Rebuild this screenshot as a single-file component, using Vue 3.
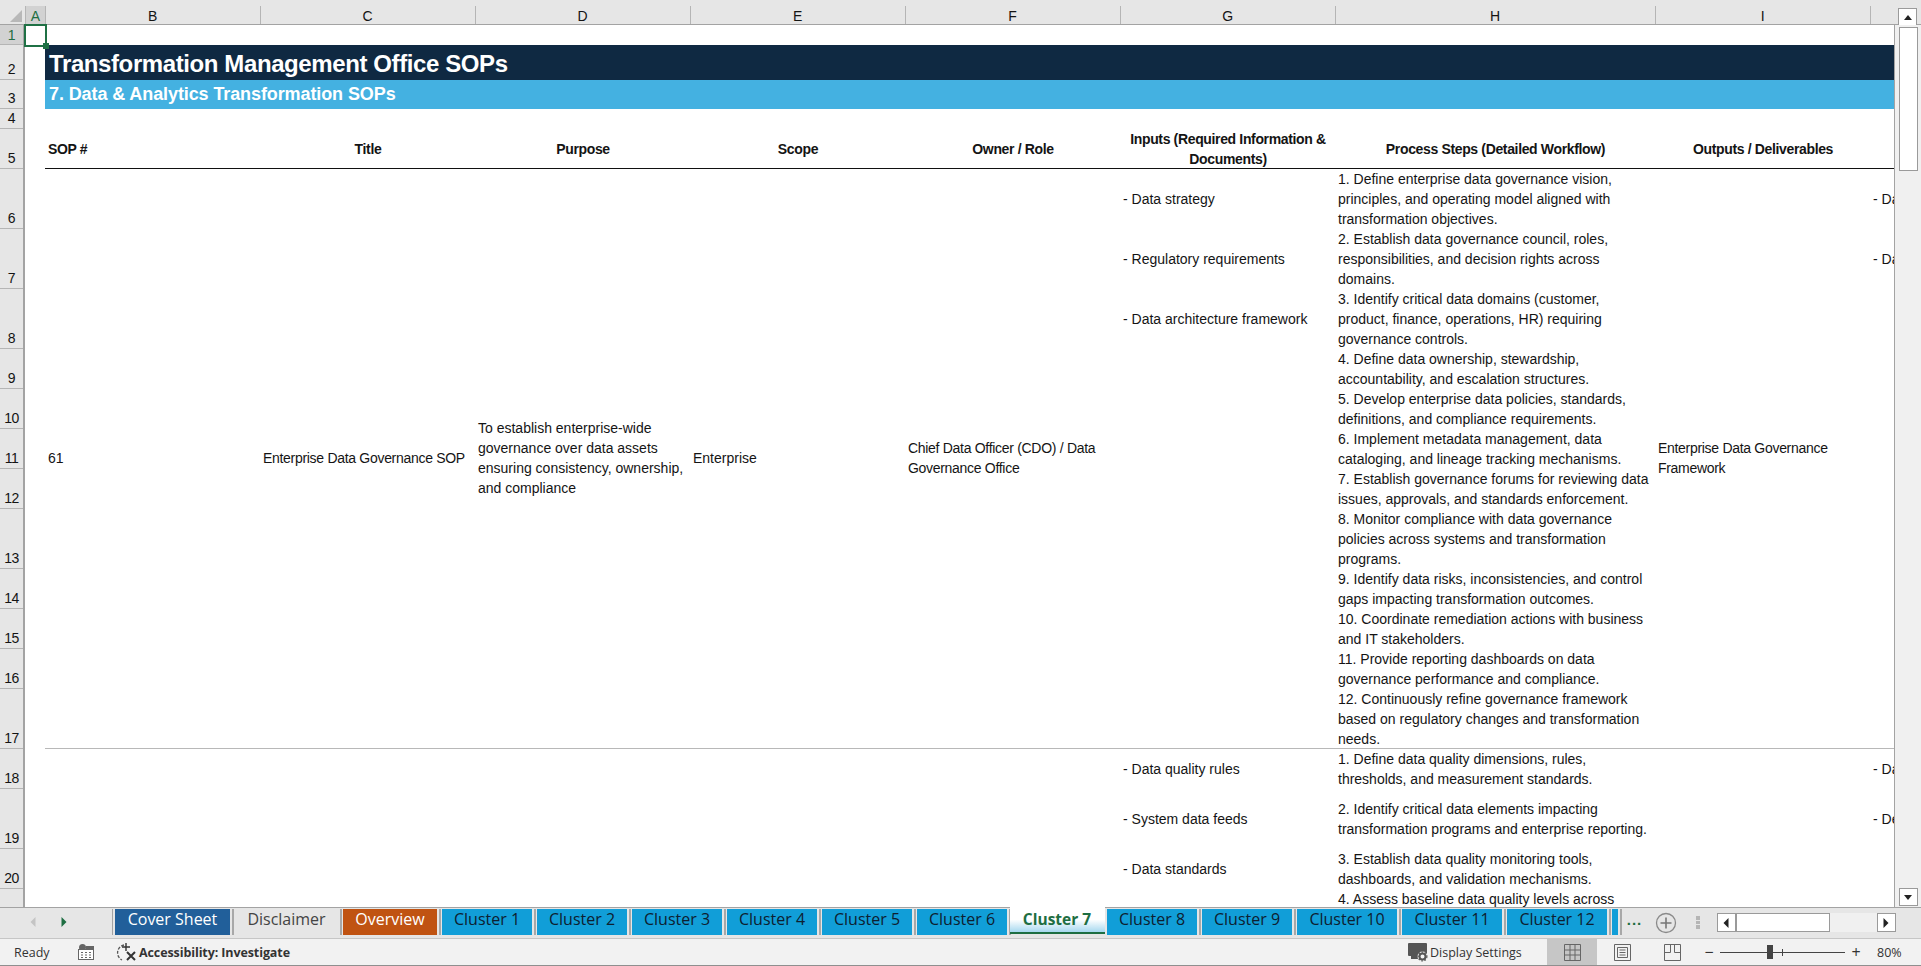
<script setup>
const colHeads = [
  { name: 'A', w: 20.5 }, { name: 'B', w: 215 }, { name: 'C', w: 215 }, { name: 'D', w: 215 },
  { name: 'E', w: 215 }, { name: 'F', w: 215 }, { name: 'G', w: 215 }, { name: 'H', w: 320 },
  { name: 'I', w: 215 }, { name: '', w: 23.5 }
]
const rowHeads = [
  [1, 20], [2, 35], [3, 29], [4, 19.5], [5, 40], [6, 60], [7, 60], [8, 60], [9, 40], [10, 40],
  [11, 40], [12, 40], [13, 60], [14, 40], [15, 40], [16, 40], [17, 60], [18, 40], [19, 60], [20, 40], [21, 60]
]
const headers = ['Title', 'Purpose', 'Scope', 'Owner / Role', 'Inputs (Required Information & Documents)', 'Process Steps (Detailed Workflow)', 'Outputs / Deliverables']
const sectionA = [
  { h: 60, g: '- Data strategy', s: '1. Define enterprise data governance vision, principles, and operating model aligned with transformation objectives.', j: '- Da' },
  { h: 60, g: '- Regulatory requirements', s: '2. Establish data governance council, roles, responsibilities, and decision rights across domains.', j: '- Da' },
  { h: 60, g: '- Data architecture framework', s: '3. Identify critical data domains (customer, product, finance, operations, HR) requiring governance controls.' },
  { h: 40, s: '4. Define data ownership, stewardship, accountability, and escalation structures.' },
  { h: 40, s: '5. Develop enterprise data policies, standards, definitions, and compliance requirements.' },
  { h: 40, s: '6. Implement metadata management, data cataloging, and lineage tracking mechanisms.' },
  { h: 40, s: '7. Establish governance forums for reviewing data issues, approvals, and standards enforcement.' },
  { h: 60, s: '8. Monitor compliance with data governance policies across systems and transformation programs.' },
  { h: 40, s: '9. Identify data risks, inconsistencies, and control gaps impacting transformation outcomes.' },
  { h: 40, s: '10. Coordinate remediation actions with business and IT stakeholders.' },
  { h: 40, s: '11. Provide reporting dashboards on data governance performance and compliance.' },
  { h: 60, s: '12. Continuously refine governance framework based on regulatory changes and transformation needs.' }
]
const sectionB = [
  { h: 40, g: '- Data quality rules', s: '1. Define data quality dimensions, rules, thresholds, and measurement standards.', j: '- Da' },
  { h: 60, g: '- System data feeds', s: '2. Identify critical data elements impacting transformation programs and enterprise reporting.', j: '- De' },
  { h: 40, g: '- Data standards', s: '3. Establish data quality monitoring tools, dashboards, and validation mechanisms.' },
  { h: 60, s: '4. Assess baseline data quality levels across' }
]
const tabs = [
  { t: 'Cover Sheet', w: 115, c: 'navy' }, { t: 'Disclaimer', w: 103, c: 'plain' }, { t: 'Overview', w: 94, c: 'rust' },
  ...[1, 2, 3, 4, 5, 6].map(n => ({ t: 'Cluster ' + n, w: 90, c: 'teal' })),
  { t: 'Cluster 7', w: 95, c: 'active' },
  ...[8, 9].map(n => ({ t: 'Cluster ' + n, w: 90, c: 'teal' })),
  ...[10, 11, 12].map(n => ({ t: 'Cluster ' + n, w: 100, c: 'teal' })),
  { t: '', w: 6, c: 'teal' }
]
</script>

<template>
  <div class="excel">
    <div class="col-bar">
      <div class="corner"><svg width="12" height="12" viewBox="0 0 12 12"><path d="M12 0V12H0Z" fill="#b8b8b8"/></svg></div>
      <div v-for="c in colHeads" :key="c.name" class="col-head" :class="{ on: c.name === 'A', last: c.name === '' }" :style="{ width: c.w + 'px' }">{{ c.name }}</div>
      <div class="v-top"><span class="vbtn"><svg width="10" height="7" viewBox="0 0 10 7"><path d="M5 1L9 6H1Z" fill="#222"/></svg></span></div>
    </div>

    <div class="middle">
      <div class="row-bar">
        <div v-for="r in rowHeads" :key="r[0]" class="row-head" :class="{ on: r[0] === 1 }" :style="{ height: r[1] + 'px' }">{{ r[0] }}</div>
      </div>

      <div class="sheet">
        <div class="sel"><i></i></div>
        <div class="clip">
          <div class="blank r1"></div>
          <div class="band title">Transformation Management Office SOPs</div>
          <div class="band sub">7. Data &amp; Analytics Transformation SOPs</div>
          <div class="blank r4"></div>
          <div class="head">
            <div class="hc sop">SOP #</div>
            <div v-for="h in headers" :key="h" class="hc mid">{{ h }}</div>
            <div class="hc"></div>
          </div>

          <div class="section a">
            <div class="merged">61</div>
            <div class="merged tight">Enterprise Data Governance SOP</div>
            <div class="merged">To establish enterprise-wide governance over data assets ensuring consistency, ownership, and compliance</div>
            <div class="merged">Enterprise</div>
            <div class="merged tight">Chief Data Officer (CDO) / Data Governance Office</div>
            <div class="colg">
              <div v-for="(r, i) in sectionA" :key="i" class="cell" :style="{ height: r.h + 'px' }">{{ r.g }}</div>
            </div>
            <div class="cols">
              <div v-for="(r, i) in sectionA" :key="i" class="cell step" :style="{ height: r.h + 'px' }">{{ r.s }}</div>
            </div>
            <div class="merged tight">Enterprise Data Governance Framework</div>
            <div class="colj">
              <div v-for="(r, i) in sectionA" :key="i" class="cell" :style="{ height: r.h + 'px' }">{{ r.j }}</div>
            </div>
          </div>

          <div class="section b">
            <div class="merged"></div><div class="merged"></div><div class="merged"></div><div class="merged"></div><div class="merged"></div>
            <div class="colg">
              <div v-for="(r, i) in sectionB" :key="i" class="cell" :style="{ height: r.h + 'px' }">{{ r.g }}</div>
            </div>
            <div class="cols">
              <div v-for="(r, i) in sectionB" :key="i" class="cell step" :class="{ top: i === 3 }" :style="{ height: r.h + 'px' }">{{ r.s }}</div>
            </div>
            <div class="merged"></div>
            <div class="colj">
              <div v-for="(r, i) in sectionB" :key="i" class="cell" :style="{ height: r.h + 'px' }">{{ r.j }}</div>
            </div>
          </div>
        </div>
      </div>

      <div class="vscroll">
        <div class="vthumb"></div>
        <div class="vspace"></div>
        <span class="vbtn"><svg width="10" height="7" viewBox="0 0 10 7"><path d="M5 6L9 1H1Z" fill="#222"/></svg></span>
      </div>
    </div>

    <div class="tabbar">
      <div class="nav">
        <svg width="8" height="10" viewBox="0 0 8 10"><path d="M6.5 0V10L1.5 5Z" fill="#c4c4c4"/></svg>
        <svg width="8" height="10" viewBox="0 0 8 10"><path d="M1.5 0V10L6.5 5Z" fill="#1e6e42"/></svg>
      </div>
      <div class="tabs">
        <div v-for="(t, i) in tabs" :key="i" class="tab" :class="t.c" :style="{ width: t.w + 'px' }">{{ t.t }}</div>
      </div>
      <div class="more">...</div>
      <svg class="add" width="22" height="22" viewBox="0 0 22 22"><circle cx="11" cy="11" r="9.5" fill="none" stroke="#8a8a8a" stroke-width="1.3"/><path d="M11 5.5V16.5M5.5 11H16.5" stroke="#777" stroke-width="1.6"/></svg>
      <div class="dots"><i></i><i></i><i></i></div>
      <div class="hscroll">
        <span class="hbtn"><svg width="8" height="10" viewBox="0 0 8 10"><path d="M6.5 0V10L1.5 5Z" fill="#222"/></svg></span>
        <span class="hthumb"></span>
        <span class="htrack"></span>
        <span class="hbtn"><svg width="8" height="10" viewBox="0 0 8 10"><path d="M1.5 0V10L6.5 5Z" fill="#222"/></svg></span>
      </div>
    </div>

    <div class="status">
      <span class="ready">Ready</span>
      <svg class="macro" width="16" height="16" viewBox="0 0 16 16"><circle cx="4.5" cy="3.5" r="3.5" fill="#666"/><rect x=".5" y="5.5" width="15" height="10" fill="#fff" stroke="#666"/><rect x="8" y="2" width="8" height="4" fill="#666"/><path d="M3 8.5h2M7 8.5h2M11 8.5h2M3 11h2M7 11h2M11 11h2M3 13.5h2M7 13.5h2M11 13.5h2" stroke="#666"/></svg>
      <svg class="acc" width="21" height="20" viewBox="0 0 21 20"><path d="M8 3A8 8 0 0 0 6 18" fill="none" stroke="#555" stroke-width="1.3" stroke-dasharray="3 1.4"/><path d="M10 1V9M6 5H14" stroke="#333" stroke-width="1.4"/><path d="M11 10L19 18M19 10L11 18" stroke="#333" stroke-width="2"/></svg>
      <span class="acc-text">Accessibility: Investigate</span>
      <span class="grow"></span>
      <svg class="disp" width="20" height="19" viewBox="0 0 20 19"><rect x="0" y="0" width="19" height="13" rx="1" fill="#555"/><rect x="3" y="13" width="7" height="3" fill="#555"/><circle cx="14.5" cy="13.5" r="5" fill="#f2f2f2"/><circle cx="14.5" cy="13.5" r="3" fill="none" stroke="#555" stroke-width="2"/><circle cx="14.5" cy="13.5" r="4.4" fill="none" stroke="#555" stroke-width="1.2" stroke-dasharray="1.6 1.6"/></svg>
      <span class="disp-text">Display Settings</span>
      <span class="view on"><svg width="17" height="17" viewBox="0 0 17 17"><path d="M.5 .5H16.5V16.5H.5ZM.5 6H16.5M.5 11H16.5M6 .5V16.5M11 .5V16.5" fill="none" stroke="#666"/></svg></span>
      <span class="view"><svg width="17" height="17" viewBox="0 0 17 17"><path d="M.5 .5H16.5V16.5H.5ZM3.5 3.5H13.5V13.5H3.5ZM5.5 6H11.5M5.5 8.5H11.5M5.5 11H11.5" fill="none" stroke="#666"/></svg></span>
      <span class="view"><svg width="17" height="17" viewBox="0 0 17 17"><path d="M.5 .5H16.5V16.5H.5ZM.5 8.5H6.5V.5M10.5 .5V8.5H16.5" fill="none" stroke="#666"/></svg></span>
      <div class="zoom">
        <span class="sym">−</span>
        <span class="slider"><i class="knob"></i><i class="tick"></i></span>
        <span class="sym">+</span>
      </div>
      <span class="pct">80%</span>
    </div>
  </div>
</template>

<style>
html, body { margin: 0; background: #fff; }
</style>

<style scoped>
.excel {
  width: 1921px;
  height: 966px;
  display: flex;
  flex-direction: column;
  overflow: hidden;
  font-family: "Liberation Sans", Arial, sans-serif;
  font-size: 14px;
  color: #141414;
  background: #fff;
}
.col-bar {
  height: 25px;
  flex: none;
  display: flex;
  box-sizing: border-box;
  background: #e6e6e6;
  border-bottom: 1px solid #a3a3a3;
}
.corner {
  width: 25px;
  flex: none;
  box-sizing: border-box;
  padding: 10px 0 0 10px;
}
.corner svg { display: block; }
.col-head {
  flex: none;
  box-sizing: border-box;
  margin-top: 6px;
  border-right: 1px solid #b5b5b5;
  text-align: center;
  line-height: 20px;
  font-size: 14px;
  letter-spacing: -0.3px;
}
.col-head.on { background: #d2d2d2; color: #1e6e42; border-left: 1px solid #b5b5b5; border-right-color: #b5b5b5; }
.col-head.last { border-right: 0; }
.v-top {
  flex: none;
  width: 27px;
  display: flex;
  justify-content: center;
  padding-top: 8px;
}
.vbtn {
  width: 19px;
  height: 18px;
  box-sizing: border-box;
  flex: none;
  background: #fff;
  border: 1px solid #9a9a9a;
  display: flex;
  align-items: center;
  justify-content: center;
}
.middle {
  flex: 1;
  min-height: 0;
  display: flex;
}
.row-bar {
  width: 25px;
  flex: none;
  box-sizing: border-box;
  background: #e6e6e6;
  border-right: 2px solid #a3a3a3;
  overflow: hidden;
}
.row-head {
  box-sizing: border-box;
  border-bottom: 1px solid #b5b5b5;
  display: flex;
  align-items: flex-end;
  justify-content: center;
  line-height: 18px;
  font-size: 14px;
  letter-spacing: -0.5px;
  padding-bottom: 1px;
}
.row-head.on { background: #d2d2d2; color: #1e6e42; align-items: center; padding: 0; }
.sheet {
  position: relative;
  flex: none;
  width: 1869px;
}
.clip {
  height: 100%;
  overflow: hidden;
  background: #fff;
}
.sel {
  position: absolute;
  left: -1px;
  top: -1px;
  z-index: 3;
  width: 23px;
  height: 23px;
  box-sizing: border-box;
  border: 2px solid #1f7145;
}
.sel i {
  position: absolute;
  right: -4px;
  bottom: -4px;
  width: 6px;
  height: 6px;
  box-sizing: border-box;
  background: #1f7145;
}
.blank.r1 { height: 20px; }
.blank.r4 { height: 19.5px; }
.band {
  margin-left: 20px;
  color: #fff;
  font-weight: 700;
  display: flex;
  align-items: center;
  padding-left: 4px;
  box-sizing: border-box;
}
.band.title { height: 35px; background: #0f2942; font-size: 24px; letter-spacing: -0.4px; padding-top: 2px; }
.band.sub { height: 29px; background: #44b1e1; font-size: 18px; letter-spacing: -0.1px; }
.head {
  display: grid;
  grid-template-columns: 215px 215px 215px 215px 215px 215px 320px 215px 24px;
  margin-left: 20px;
  height: 40px;
  box-sizing: border-box;
  border-bottom: 1.5px solid #111;
  font-weight: 700;
  line-height: 20px;
  letter-spacing: -0.35px;
}
.hc { display: flex; align-items: center; padding: 0 2px 0 3px; box-sizing: border-box; }
.hc.mid { justify-content: center; text-align: center; }
.section {
  display: grid;
  grid-template-columns: 215px 215px 215px 215px 215px 215px 320px 215px 24px;
  margin-left: 20px;
  line-height: 20px;
}
.section.a { height: 580px; border-bottom: 1px solid #b8b8b8; box-sizing: border-box; }
.merged { display: flex; align-items: center; padding: 0 2px 1px 3px; box-sizing: border-box; }
.tight { letter-spacing: -0.3px; }
.cell { display: flex; align-items: center; padding: 0 2px 0 3px; box-sizing: border-box; }
.step { padding-right: 4px; }
.step.top { align-items: flex-start; }
.colj { overflow: hidden; }
.colj .cell { white-space: nowrap; }
.vscroll {
  flex: none;
  width: 27px;
  display: flex;
  flex-direction: column;
  align-items: center;
  background: #f0f0f0;
  border-left: 1px solid #a3a3a3;
  box-sizing: border-box;
  padding: 2px 0 1px;
}
.vthumb {
  width: 19px;
  height: 144px;
  box-sizing: border-box;
  background: #fff;
  border: 1px solid #9a9a9a;
  flex: none;
}
.vspace { flex: 1; }
.tabbar {
  height: 32px;
  flex: none;
  box-sizing: border-box;
  background: #e6e6e6;
  border-top: 1px solid #a3a3a3;
  border-bottom: 1px solid #c6c6c6;
  display: flex;
  align-items: flex-start;
}
.nav {
  width: 113px;
  height: 26px;
  margin-top: 1px;
  flex: none;
  display: flex;
  gap: 23px;
  padding: 8px 0 0 29px;
  box-sizing: border-box;
  border-right: 1px solid #a3a3a3;
}
.tabs {
  display: flex;
  flex: none;
  gap: 5px;
  padding-top: 1px;
  padding-left: 2px;
}
.tab {
  height: 26px;
  flex: none;
  box-sizing: border-box;
  font-family: "Open Sans", sans-serif;
  font-size: 16px;
  line-height: 21px;
  text-align: center;
  white-space: nowrap;
  position: relative;
}
.tab::after {
  content: "";
  position: absolute;
  right: -3.5px;
  top: 0;
  bottom: 0;
  width: 1.5px;
  background: #a8a8a8;
}
.tab.navy { background: #215f9a; color: #fff; }
.tab.plain { color: #444; }
.tab.rust { background: #c05312; color: #fff; }
.tab.teal { background: #119ed8; color: #0e2030; }
.tab.active {
  height: 27.5px;
  margin: -2.5px -2.5px 0;
  background: linear-gradient(#fff 50%, #a6d8ef);
  color: #1e6e42;
  font-weight: 700;
  font-size: 15.5px;
  border-bottom: 2px solid #1e6e42;
  line-height: 25px;
}
.tab.active::after { display: none; }
.more { width: 33px; flex: none; color: #1e6e42; font-size: 15px; text-align: center; line-height: 24px; font-weight: 700; letter-spacing: 1px; }
.add { flex: none; margin: 4px 0 0 4px; }
.dots { width: 12px; margin: 8px 0 0 15px; flex: none; display: flex; flex-direction: column; gap: 1px; align-items: center; }
.dots i { width: 4px; height: 3.5px; background: #b5b5b5; }
.hscroll {
  flex: none;
  margin: 5px 0 0 12.5px;
  width: 179px;
  height: 19px;
  display: flex;
  background: #f0f0f0;
}
.hbtn, .hthumb {
  box-sizing: border-box;
  background: #fff;
  border: 1px solid #9a9a9a;
  display: flex;
  align-items: center;
  justify-content: center;
  flex: none;
}
.hbtn { width: 19px; }
.hthumb { width: 94px; }
.htrack { flex: 1; }
.status {
  height: 27px;
  flex: none;
  box-sizing: border-box;
  background: #f2f2f2;
  border-bottom: 1px solid #8f8f8f;
  display: flex;
  align-items: center;
  font-family: "Open Sans", sans-serif;
  font-size: 12.5px;
  color: #333;
}
.ready { margin-left: 14px; width: 64px; flex: none; }
.macro { flex: none; }
.acc { flex: none; margin-left: 22px; }
.acc-text { margin-left: 2px; font-weight: 700; font-size: 12.5px; letter-spacing: -0.1px; }
.grow { flex: 1; }
.disp { flex: none; }
.disp-text { margin-left: 2px; width: 117px; flex: none; }
.view { width: 50px; height: 26px; flex: none; display: flex; align-items: center; justify-content: center; }
.view.on { background: #c6c6c6; }
.zoom { display: flex; align-items: center; margin-left: 4px; flex: none; }
.sym { width: 16px; text-align: center; font-size: 16px; line-height: 20px; }
.slider { width: 125px; height: 1px; background: #444; margin: 0 3px; position: relative; }
.knob { position: absolute; left: 47px; top: -7px; width: 6px; height: 14px; background: #444; }
.tick { position: absolute; left: 62px; top: -3px; width: 1px; height: 7px; background: #444; }
.pct { margin-left: 13px; width: 44px; flex: none; }
</style>
